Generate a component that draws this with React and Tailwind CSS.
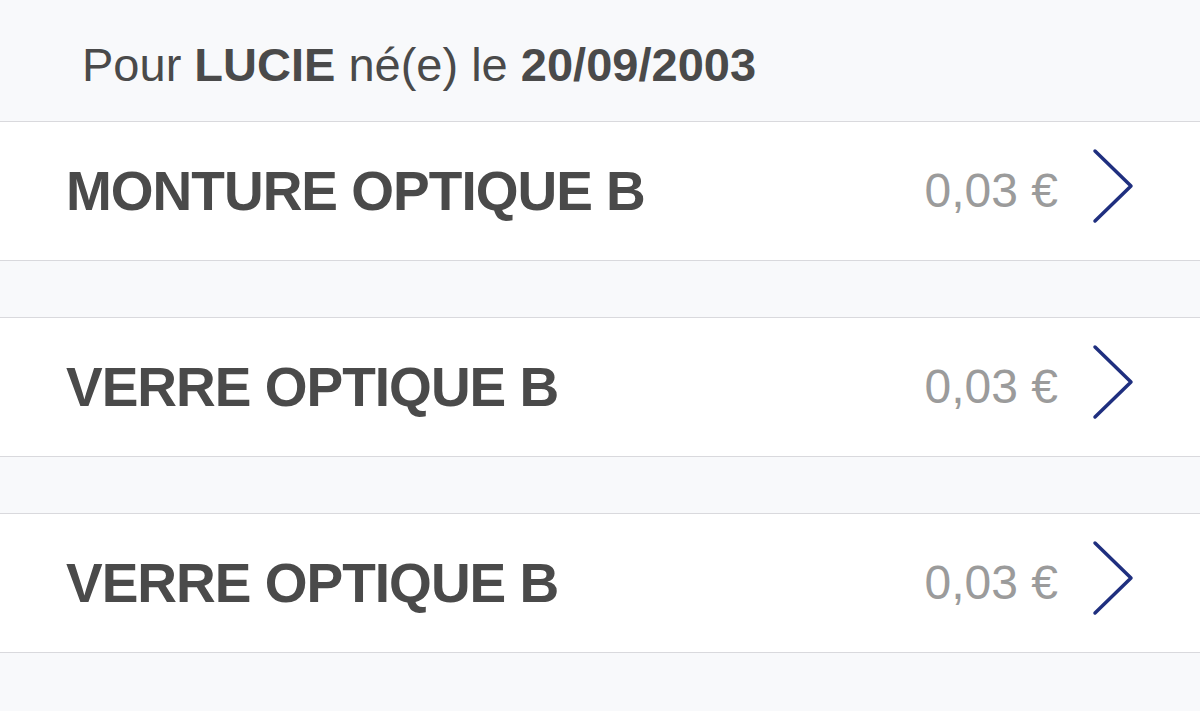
import React from "react";

const rows = [
  { label: "MONTURE OPTIQUE B", price: "0,03 €" },
  { label: "VERRE OPTIQUE B", price: "0,03 €" },
  { label: "VERRE OPTIQUE B", price: "0,03 €" },
];

function Chevron() {
  return (
    <svg width="42" height="76" viewBox="0 0 42 76" className="shrink-0 mb-[10px]">
      <polyline
        points="3,3 39,38 3,73"
        fill="none"
        stroke="#1f2f7f"
        strokeWidth="3.5"
        strokeLinecap="round"
        strokeLinejoin="round"
      />
    </svg>
  );
}

function Row({ label, price }) {
  return (
    <div className="h-[140px] bg-white border-y border-[#d9d9dd] flex items-center pl-[66px] pr-[66px]">
      <div className="flex-1 text-[55px] font-bold text-[#4a4a4a] tracking-[-1px]">
        {label}
      </div>
      <div className="text-[48px] text-[#9b9b9b] mr-[34px]">{price}</div>
      <Chevron />
    </div>
  );
}

export default function App() {
  return (
    <div
      className="w-[1200px] h-[711px] bg-[#f8f9fb] overflow-hidden"
      style={{ fontFamily: '"Liberation Sans", Arial, sans-serif' }}
    >
      <div className="h-[121px] flex items-center pl-[82px] pt-[10px] text-[47px] text-[#4a4a4a]">
        <span>
          Pour <b>LUCIE</b> né(e) le <b>20/09/2003</b>
        </span>
      </div>
      <div className="flex flex-col gap-[56px]">
        {rows.map((r, i) => (
          <Row key={i} {...r} />
        ))}
      </div>
    </div>
  );
}
